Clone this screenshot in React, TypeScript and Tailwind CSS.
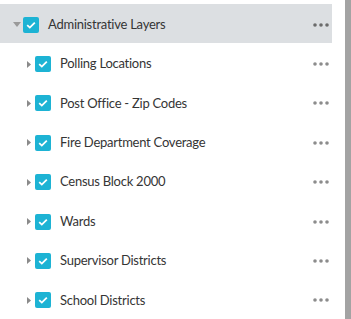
import React from "react";

const items = [
  "Polling Locations",
  "Post Office - Zip Codes",
  "Fire Department Coverage",
  "Census Block 2000",
  "Wards",
  "Supervisor Districts",
  "School Districts",
];

function Check() {
  return (
    <div className="w-4 h-4 rounded-[2px] bg-[#1db3d4] flex items-center justify-center shrink-0">
      <svg width="12" height="12" viewBox="0 0 12 12">
        <path d="M2.2 6.2 L4.8 8.6 L9.8 3.6" stroke="white" strokeWidth="1.8" fill="none" />
      </svg>
    </div>
  );
}

function Dots({ color }: { color: string }) {
  return (
    <svg width="16" height="4" viewBox="0 0 16 4" className="shrink-0">
      <circle cx="2" cy="2" r="1.8" fill={color} />
      <circle cx="8" cy="2" r="1.8" fill={color} />
      <circle cx="14" cy="2" r="1.8" fill={color} />
    </svg>
  );
}

export default function App() {
  return (
    <div className="w-[351px] h-[319px] bg-white flex overflow-hidden" style={{ fontFamily: "Lato, 'Open Sans', sans-serif" }}>
      <div className="w-[332px] pt-1 flex flex-col">
        <div className="h-10 bg-[#dcdfe2] flex items-center pl-[13px] pr-[3px] pt-[2px]">
          <svg width="8" height="5" viewBox="0 0 8 5" className="shrink-0 mr-[2px]">
            <path d="M0 0 L8 0 L4 5 Z" fill="#9a9a9a" />
          </svg>
          <Check />
          <span className="ml-[9px] text-[13px] tracking-[-0.25px] text-[#353535] flex-1">Administrative Layers</span>
          <Dots color="#6b6b6b" />
        </div>
        {items.map((t) => (
          <div key={t} className="h-10 flex items-center pl-[27px] pr-[3px] pt-[2px]">
            <svg width="4" height="7" viewBox="0 0 4 7" className="shrink-0 mr-[4px]">
              <path d="M0 0 L4 3.5 L0 7 Z" fill="#8a8a8a" />
            </svg>
            <Check />
            <span className="ml-[9px] text-[13px] tracking-[-0.25px] text-[#353535] flex-1">{t}</span>
            <Dots color="#8c8c8c" />
          </div>
        ))}
      </div>
      <div className="w-[13px]" />
      <div className="w-[6px] h-full bg-[#a3a3a3]" />
    </div>
  );
}
